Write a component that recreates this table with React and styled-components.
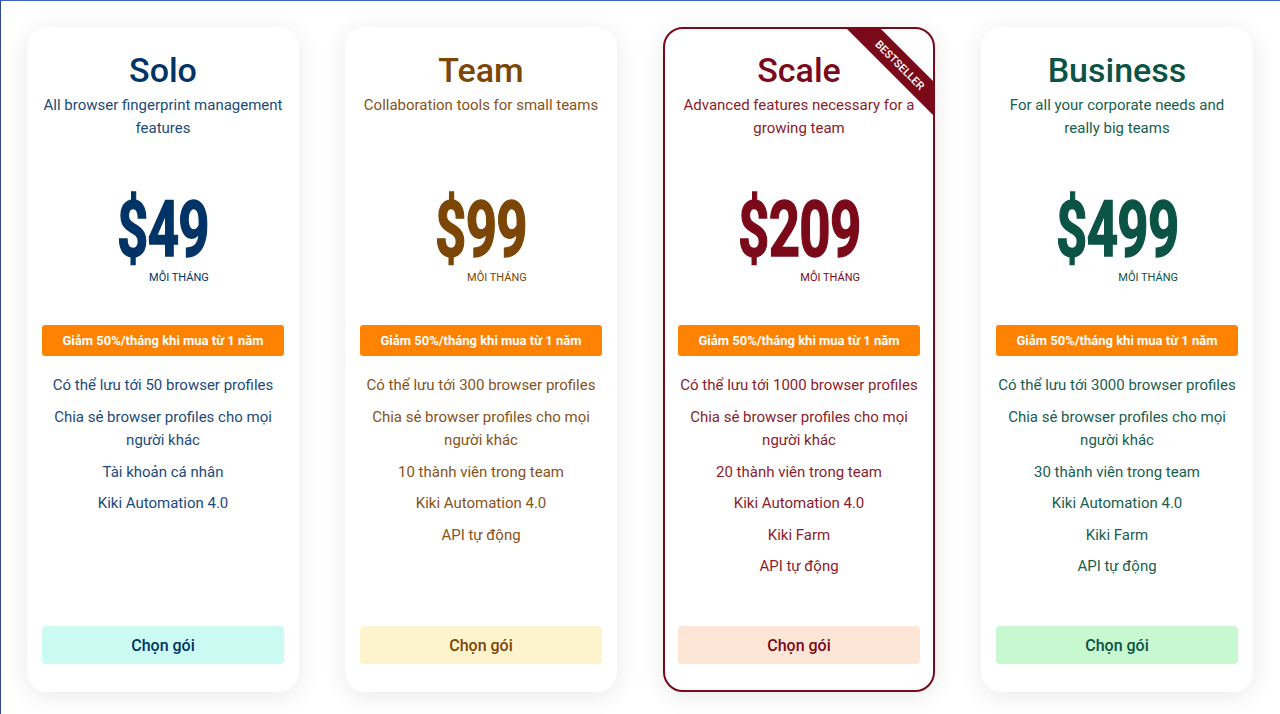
import React from 'react';
import styled, { createGlobalStyle } from 'styled-components';

const GlobalStyle = createGlobalStyle`
  html, body {
    margin: 0;
    padding: 0;
    background: #fff;
    font-family: Roboto, "Noto Sans", sans-serif;
  }
  * { box-sizing: border-box; }
`;

const plans = [
  {
    name: 'Solo',
    desc: 'All browser fingerprint management features',
    price: '$49',
    main: '#003366',
    text: '#1c4a7b',
    button: '#ccfbf3',
    features: [
      'Có thể lưu tới 50 browser profiles',
      'Chia sẻ browser profiles cho mọi người khác',
      'Tài khoản cá nhân',
      'Kiki Automation 4.0',
    ],
  },
  {
    name: 'Team',
    desc: 'Collaboration tools for small teams',
    price: '$99',
    main: '#7b4606',
    text: '#86531a',
    button: '#fdf3cc',
    features: [
      'Có thể lưu tới 300 browser profiles',
      'Chia sẻ browser profiles cho mọi người khác',
      '10 thành viên trong team',
      'Kiki Automation 4.0',
      'API tự động',
    ],
  },
  {
    name: 'Scale',
    desc: 'Advanced features necessary for a growing team',
    price: '$209',
    main: '#7a0a19',
    text: '#8a1d2c',
    button: '#fee6d6',
    featured: true,
    features: [
      'Có thể lưu tới 1000 browser profiles',
      'Chia sẻ browser profiles cho mọi người khác',
      '20 thành viên trong team',
      'Kiki Automation 4.0',
      'Kiki Farm',
      'API tự động',
    ],
  },
  {
    name: 'Business',
    desc: 'For all your corporate needs and really big teams',
    price: '$499',
    main: '#0b5345',
    text: '#17604f',
    button: '#c8f8d0',
    features: [
      'Có thể lưu tới 3000 browser profiles',
      'Chia sẻ browser profiles cho mọi người khác',
      '30 thành viên trong team',
      'Kiki Automation 4.0',
      'Kiki Farm',
      'API tự động',
    ],
  },
];

export default function App() {
  return (
    <>
      <GlobalStyle />
      <Page>
        {plans.map((plan) => (
          <Card key={plan.name} featured={plan.featured} main={plan.main}>
            {plan.featured && <Ribbon main={plan.main}>Bestseller</Ribbon>}
            <Title color={plan.main}>{plan.name}</Title>
            <Desc color={plan.text}>{plan.desc}</Desc>

            <PriceBox style={{ width: plan.price.length * 30.5 }}>
              <Amount color={plan.main}>{plan.price}</Amount>
              <Period color={plan.main}>Mỗi tháng</Period>
            </PriceBox>

            <Discount>Giảm 50%/tháng khi mua từ 1 năm</Discount>

            <Features>
              {plan.features.map((f) => (
                <Feature key={f} color={plan.text}>{f}</Feature>
              ))}
            </Features>

            <ChooseButton bg={plan.button} color={plan.main}>Chọn gói</ChooseButton>
          </Card>
        ))}
      </Page>
    </>
  );
}

const Page = styled.div`
  width: 1280px;
  height: 714px;
  border-top: 1px solid #3d5fcb;
  border-left: 1px solid #2c4a8c;
  padding: 26px 0 0 26px;
  display: flex;
  gap: 46px;
  align-items: flex-start;
  overflow: hidden;
`;

const Card = styled.div`
  position: relative;
  width: 272px;
  height: 665px;
  flex-shrink: 0;
  background: #fff;
  border-radius: 20px;
  border: ${(p) => (p.featured ? `2px solid ${p.main}` : '2px solid transparent')};
  box-shadow: 0 4px 24px rgba(0, 0, 0, 0.09);
  padding: 21px 13px 26px;
  display: flex;
  flex-direction: column;
  align-items: stretch;
  text-align: center;
  overflow: hidden;
`;

const Ribbon = styled.div`
  position: absolute;
  top: 24px;
  right: -47px;
  width: 160px;
  height: 24px;
  background: ${(p) => p.main};
  color: #fff;
  transform: rotate(45deg);
  font-size: 11px;
  font-weight: 500;
  text-transform: uppercase;
  display: flex;
  align-items: center;
  justify-content: center;
`;

const Title = styled.h2`
  margin: 0;
  font-size: 34px;
  line-height: 40px;
  font-weight: 500;
  color: ${(p) => p.color};
`;

const Desc = styled.p`
  margin: 4px 0 0;
  min-height: 46px;
  font-size: 15px;
  line-height: 23px;
  color: ${(p) => p.color};
`;

const PriceBox = styled.div`
  align-self: center;
  margin-top: 52px;
  display: flex;
  flex-direction: column;
  align-items: stretch;
`;

const Amount = styled.div`
  font-size: 78px;
  line-height: 76px;
  font-weight: 700;
  letter-spacing: -1px;
  color: ${(p) => p.color};
  -webkit-text-stroke: 1.5px ${(p) => p.color};
  white-space: nowrap;
  width: max-content;
  transform: scaleX(0.7);
  transform-origin: left center;
`;

const Period = styled.div`
  margin-top: 3px;
  font-size: 11px;
  line-height: 13px;
  text-align: right;
  text-transform: uppercase;
  white-space: nowrap;
  color: ${(p) => p.color};
`;

const Discount = styled.div`
  margin-top: 41px;
  height: 31px;
  background: #ff8300;
  border-radius: 3px;
  color: #fff;
  font-size: 13px;
  font-weight: 700;
  display: flex;
  align-items: center;
  justify-content: center;
`;

const Features = styled.ul`
  list-style: none;
  margin: 18px -4px 0;
  padding: 0;
  flex: 1;
  display: flex;
  flex-direction: column;
  gap: 8px;
`;

const Feature = styled.li`
  font-size: 15px;
  line-height: 23.5px;
  color: ${(p) => p.color};
`;

const ChooseButton = styled.button`
  height: 38px;
  border: none;
  border-radius: 4px;
  background: ${(p) => p.bg};
  color: ${(p) => p.color};
  font-family: Roboto, sans-serif;
  font-size: 16px;
  font-weight: 500;
  cursor: pointer;
`;
